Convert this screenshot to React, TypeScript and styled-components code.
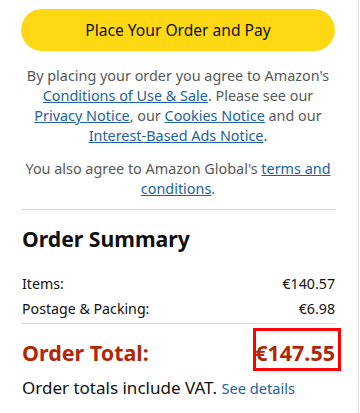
import React from "react";
import styled, { createGlobalStyle } from "styled-components";

const GlobalStyle = createGlobalStyle`
  html, body { margin: 0; padding: 0; background: #ffffff; }
  body { font-family: "Noto Sans", "Liberation Sans", Arial, sans-serif; color: #0F1111; }
`;

const Page = styled.div`
  box-sizing: border-box;
  width: 359px;
  min-height: 413px;
  border-right: 1px solid #DDDDDD;
  padding: 9px 23px 0 21px;
  display: flex;
  flex-direction: column;
`;

const PayButton = styled.button`
  height: 42px;
  width: 100%;
  border: none;
  border-radius: 21px;
  background: #FFD814;
  color: #0F1111;
  font-family: inherit;
  font-size: 15.6px;
  cursor: pointer;
  padding: 0;
`;

const Legal = styled.p<{ $gap: number }>`
  margin: ${(p) => p.$gap}px 0 0;
  text-align: center;
  font-size: 14.4px;
  line-height: 20px;
  color: #565959;
`;

const Link = styled.a`
  color: #2162A1;
  text-decoration: underline;
`;

const Divider = styled.hr<{ $gap: number }>`
  margin: ${(p) => p.$gap}px 0 0;
  border: none;
  border-top: 1px solid #D5D9D9;
  height: 0;
`;

const Heading = styled.h2`
  margin: 14px 0 0 1px;
  font-size: 21.2px;
  line-height: 30px;
  font-weight: 700;
  color: #0F1111;
`;

const Lines = styled.div`
  margin-top: 20px;
  display: flex;
  flex-direction: column;
  gap: 5px;
`;

const Line = styled.div`
  display: flex;
  justify-content: space-between;
  font-size: 14.2px;
  line-height: 20px;
  color: #0F1111;
  padding-left: 1px;
`;

const TotalRow = styled.div`
  margin-top: 15px;
  display: flex;
  justify-content: space-between;
  font-size: 21.5px;
  line-height: 28px;
  font-weight: 700;
  color: #B12704;
  padding-left: 1px;
`;

const TotalValue = styled.span`
  position: relative;
  &::after {
    content: "";
    position: absolute;
    top: -11px;
    bottom: -4px;
    left: -2px;
    right: -6px;
    border: 3px solid #FF0000;
  }
`;

const VatLine = styled.div`
  margin-top: 9px;
  font-size: 17px;
  line-height: 24px;
  color: #0F1111;
  padding-left: 1px;
`;

const SmallLink = styled.a`
  color: #2162A1;
  font-size: 14.6px;
  text-decoration: none;
`;

export default function App() {
  return (
    <>
      <GlobalStyle />
      <Page>
        <PayButton>Place Your Order and Pay</PayButton>
        <Legal $gap={15}>
          By placing your order you agree to Amazon's{" "}
          <Link>Conditions of Use &amp; Sale</Link>. Please see our{" "}
          <Link>Privacy Notice</Link>, our <Link>Cookies Notice</Link> and our{" "}
          <Link>Interest-Based Ads Notice</Link>.
        </Legal>
        <Legal $gap={13}>
          You also agree to Amazon Global's <Link>terms and conditions</Link>.
        </Legal>
        <Divider $gap={10} />
        <Heading>Order Summary</Heading>
        <Lines>
          <Line>
            <span>Items:</span>
            <span>€140.57</span>
          </Line>
          <Line>
            <span>Postage &amp; Packing:</span>
            <span>€6.98</span>
          </Line>
        </Lines>
        <Divider $gap={4} />
        <TotalRow>
          <span>Order Total:</span>
          <TotalValue>€147.55</TotalValue>
        </TotalRow>
        <VatLine>
          Order totals include VAT. <SmallLink>See details</SmallLink>
        </VatLine>
      </Page>
    </>
  );
}
